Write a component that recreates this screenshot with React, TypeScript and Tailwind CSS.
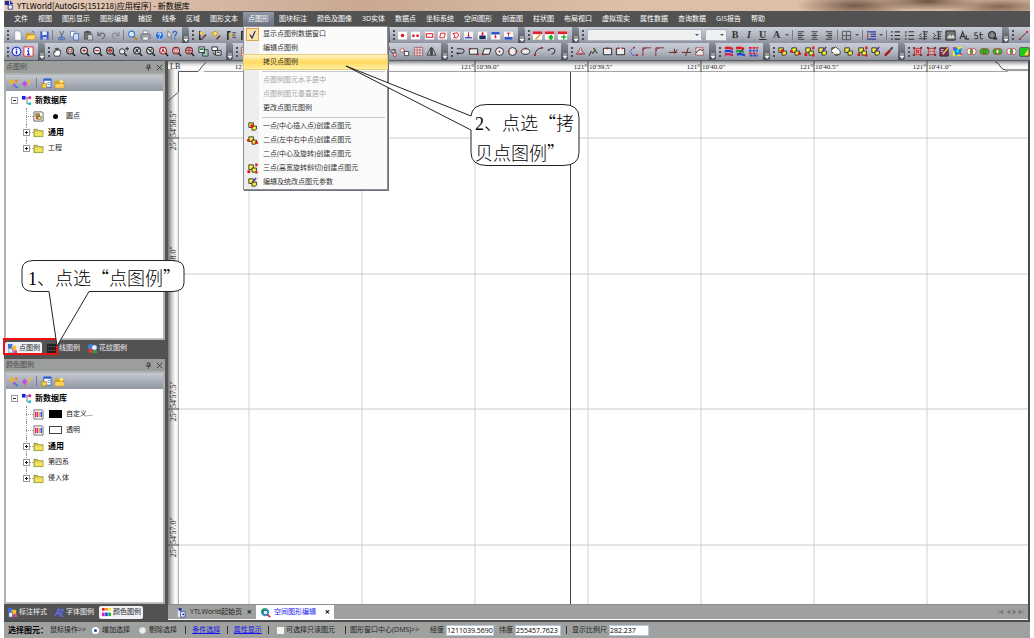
import React, { useState } from 'react';
import clsx from 'clsx';

type Drawing = React.ReactNode;

const lens = (inner: Drawing, color = '#222') => (
  <>
    <circle cx="5.5" cy="5" r="3.7" fill="#e8e8ea" stroke={color} strokeWidth="1.2" />
    <path d="M8.2 7.8 11 11" stroke="#222" strokeWidth="1.7" />
    {inner}
  </>
);

const sheet = (inner: Drawing) => (
  <>
    <rect x="1" y="1.5" width="10" height="9" fill="#fff" stroke="#b9bdc9" strokeWidth=".5" />
    {inner}
  </>
);

const headed = (inner: Drawing) => (
  <>
    <rect x="1" y="1.5" width="10" height="9" fill="#fff" />
    <rect x="1" y="1.5" width="10" height="3" fill="#e0202a" />
    {inner}
  </>
);

// yellow pair of blocks shared by all "create point" tools
const blocks = (inner: Drawing) => (
  <>
    <path d="M2 2h5v5H2z" fill="#f4ee3c" stroke="#222" strokeWidth=".9" />
    <path d="M5.5 5.5h4.8v3.2L9 10H5.5z" fill="#f4ee3c" stroke="#222" strokeWidth=".9" />
    {inner}
  </>
);

const dotted = (inner: Drawing) => (
  <>
    <rect x="2.5" y="2.5" width="7" height="7" fill="#d9b9bd" stroke="#a02028" strokeWidth=".8" />
    <path d="M1 1h2v2H1zM9 1h2v2H9zM1 9h2v2H1zM9 9h2v2H9z" fill="#8c1c22" />
    {inner}
  </>
);

const venn = (left: string, right: string, middle: string) => (
  <>
    <circle cx="4.3" cy="6" r="3.3" fill={left} />
    <circle cx="7.7" cy="6" r="3.3" fill={right} />
    <path d="M6 3.2a3.3 3.3 0 0 1 0 5.6 3.3 3.3 0 0 1 0-5.6z" fill={middle} />
    <circle cx="4.3" cy="6" r="3.3" fill="none" stroke="#b3262c" strokeWidth=".7" />
    <circle cx="7.7" cy="6" r="3.3" fill="none" stroke="#b3262c" strokeWidth=".7" />
  </>
);

const icons: Record<string, Drawing> = {
  new: <path d="M3 1h4.5L10 3.500V11H3z" fill="#fff" stroke="#7d8aa5" strokeWidth=".7" />,
  open: (
    <>
      <path d="M1 3h4l1 1h4v6H1z" fill="#d79a25" />
      <path d="M3 5.500h9L10 10.500H1z" fill="#ffd869" stroke="#b67b12" strokeWidth=".5" />
      <path d="M7 2.500q2-2 3.500.5" stroke="#2d62b5" fill="none" />
    </>
  ),
  save: (
    <>
      <path d="M1.500 1.500h9v9h-9z" fill="#3f57c8" />
      <path d="M3.500 1.500h5v4h-5z" fill="#e9eefb" />
      <path d="M4 7.500h4.500v3H4z" fill="#b8c4ea" />
    </>
  ),
  cut: (
    <>
      <path d="M4 1l3 7M8.500 1l-3 7" stroke="#5b6b8c" strokeWidth="1.100" />
      <circle cx="4.200" cy="9.300" r="1.500" fill="none" stroke="#2b62c4" />
      <circle cx="8" cy="9.300" r="1.500" fill="none" stroke="#2b62c4" />
    </>
  ),
  copy: (
    <>
      <path d="M1.500 1.500h5v6h-5z" fill="#fff" stroke="#4a6fb5" strokeWidth=".8" />
      <path d="M5 4h5.500v7H5z" fill="#cfdef7" stroke="#3560ab" strokeWidth=".8" />
    </>
  ),
  paste: (
    <>
      <path d="M1.500 2h7v8h-7z" fill="#6f6f72" stroke="#444" strokeWidth=".7" />
      <path d="M3.500 1h3v2h-3z" fill="#444" />
      <path d="M5 5h5.500v6H5z" fill="#c9ccd2" stroke="#555" strokeWidth=".7" />
    </>
  ),
  undo: <path d="M2 2v4h4M2.500 5.500C5 2 10 3 9.500 6.500 9 9 7 9.500 6 10" fill="none" stroke="#6b6f78" strokeWidth="1.400" />,
  redo: <path d="M10 2v4H6M9.500 5.500C7 2 2 3 2.500 6.500 3 9 5 9.500 6 10" fill="none" stroke="#8c9099" strokeWidth="1.400" />,
  zoom: (
    <>
      <circle cx="5" cy="4.500" r="3.300" fill="#d5e9fb" stroke="#3874c8" strokeWidth="1.200" />
      <path d="M7.500 7l3.500 4" stroke="#b98225" strokeWidth="1.800" />
    </>
  ),
  print: (
    <>
      <path d="M3.500 1h5v3h-5z" fill="#fff" stroke="#666" strokeWidth=".7" />
      <path d="M1 4.500h10V9H1z" fill="#a8acb5" stroke="#555" strokeWidth=".7" />
      <path d="M3 7.500h6V11H3z" fill="#fff" stroke="#666" strokeWidth=".7" />
    </>
  ),
  help: (
    <>
      <circle cx="6" cy="6" r="4.500" fill="#2d72d8" stroke="#e7effc" strokeWidth=".6" />
      <path d="M4.700 4.800c0-2 3-1.700 2.700 0-.2 1-1.400 1-1.400 2M6 8.200v1" fill="none" stroke="#fff" strokeWidth="1.100" />
    </>
  ),
  whatis: (
    <>
      <path d="M1 1l4.500 5-2 .3L5 9.500 3.800 10 2.500 7 1 8z" fill="#fff" stroke="#345" strokeWidth=".6" />
      <path d="M6.500 3.500c0-3 4.500-2.500 4 0-.3 1.500-2 1.500-2 3.500M8.500 8.500v1.700" fill="none" stroke="#2867c8" strokeWidth="1.400" />
    </>
  ),
  penBar: <><path d="M3 1v10M3 10h3" stroke="#222" strokeWidth="1.500" /><path d="M3 2h3v3H3z" fill="#f2d51c" /><path d="M6 9l4-4" stroke="#7a2222" strokeWidth="1.500" /></>,
  penRing: <><circle cx="4.500" cy="4" r="2.500" fill="#f5e76b" stroke="#c0901a" /><path d="M6 10l4-4" stroke="#7a2222" strokeWidth="1.500" /></>,
  barText: <><path d="M2 1v10M2 2h3" stroke="#222" strokeWidth="1.600" /><path d="M4 4h3v3H4z" fill="#d8c21c" /><path d="M7 3h4M7 5.500h3M7 8h4" stroke="#333" /></>,
  info: <><circle cx="6" cy="6" r="4.700" fill="#fff" stroke="#1c2bdc" strokeWidth="1.200" /><path d="M6 5v4M6 2.700v1.400" stroke="#1c2bdc" strokeWidth="1.700" /></>,
  infoBox: <><path d="M1 1h10v10H1z" fill="#fff" stroke="#e0262c" /><path d="M6 5v4.500M6 2.200v1.600M4.500 5.200H6M4.500 9.300h3" stroke="#1c2bdc" strokeWidth="1.400" /></>,
  hand: <path d="M3 11C2 8 1 7 2 6l1.500 1V3q1-1 1.300 0V5 2.500q1-1 1.400 0V5l.3-2q1-.7 1.200.3V5.500q1-1.500 2-.5L8.500 11z" fill="#fff" stroke="#222" strokeWidth=".8" />,
  zWin: lens(<path d="M3.500 3.500h4v3h-4z" fill="none" stroke="#8a1c1c" strokeWidth=".8" />),
  zIn: lens(<path d="M3.500 5h4M5.500 3v4" stroke="#c01c1c" />),
  zOut: lens(<path d="M3.500 5h4" stroke="#c01c1c" strokeWidth="1.200" />),
  zPan: lens(<path d="M2 5h7M5.500 1.500v7M4 3.500h3v3H4z" fill="none" stroke="#a01c1c" strokeWidth=".8" />),
  zPlus: <><circle cx="4.500" cy="6" r="3" fill="#e8e8ea" stroke="#222" /><path d="M7 8l2.500 3" stroke="#222" strokeWidth="1.500" /><path d="M8 3h4M10 1v4" stroke="#222" /></>,
  zNo: lens(<path d="M3.500 7l4-4.500M4 3l3 4" stroke="#222" strokeWidth="1.100" />),
  zPrev: lens(<path d="M3.500 3.500l4 3.500M7.500 3L5 6" stroke="#222" strokeWidth="1.100" />),
  zAll: lens(<path d="M4 7l1.500-4L7 7M4.500 5.500h2" fill="none" stroke="#c01c1c" />, '#b01c1c'),
  zDoc: lens(<path d="M4.200 3h2.500v4H4.200z" fill="#fff" stroke="#c01c1c" strokeWidth=".8" />, '#7c2020'),
  zGrid: lens(<path d="M2 5h7M5.500 1.500v7M3 3.300h5M3 6.700h5" stroke="#a01c1c" strokeWidth=".8" />, '#7c2020'),
  winGreen: <><path d="M1 1h6v6H1z" fill="#fff" stroke="#222" /><path d="M2 2.500h4v2H2z" fill="#148a3c" /><path d="M7 4h4v7H5V8h2z" fill="#9fc7b0" stroke="#223" strokeWidth=".8" /></>,
  winCopy: <><path d="M1 1h6v4H1z" fill="#fff" stroke="#222" /><path d="M5 5h6v5H5z" fill="#e6e6ea" stroke="#222" /><path d="M6.500 7h3M2 7l2 3" stroke="#222" /></>,
  sDot: sheet(<circle cx="6" cy="6" r="1.900" fill="#e0141c" />),
  sTwo: sheet(<path d="M2.500 5h2.500v2.500H2.500zM7 5h2.500v2.500H7z" fill="#e0141c" />),
  sRect: sheet(<path d="M2.500 4h7v4h-7z" fill="none" stroke="#e0141c" strokeWidth="1.100" />),
  sSkew: sheet(<path d="M4 3.500h5L8 8.500H3z" fill="none" stroke="#e0141c" />),
  sPoly: sheet(<path d="M3 4l5-1 1.500 2.500-2 3H4l1.500-2z" fill="none" stroke="#e0141c" />),
  sDown: sheet(<><path d="M2 8.500h8" stroke="#1c3cc8" strokeWidth="1.400" /><path d="M6 2.500v5M4.500 6L6 7.500 7.500 6" stroke="#e0141c" fill="none" /></>),
  sFill: sheet(<><path d="M2.500 6h7v4h-7z" fill="#1c2b5c" /><path d="M5 2.500h2v3.500H5z" fill="#e0141c" /></>),
  sTop: sheet(<><path d="M1.500 2h9v3h-9z" fill="#2c58c8" /><path d="M6 5v4M4.500 7.500h3" stroke="#e0141c" /></>),
  sBase: sheet(<><path d="M1.500 7.500h9v3h-9z" fill="#2c58c8" /><path d="M6 3v4M4 3.500h4" stroke="#e0141c" /></>),
  hPen: headed(<path d="M4 10l5-5" stroke="#d8961c" strokeWidth="1.600" />),
  hDot: headed(<path d="M7.500 5.500v5M5 8h5" stroke="#1eb41e" strokeWidth="2.400" />),
  hPlus: headed(<path d="M7.500 5v5.500M4.700 7.700h5.500" stroke="#1eb41e" strokeWidth="1.500" />),
  left: <path d="M2 2h7M2 4h5M2 6h7M2 8h5M2 10h7" stroke="#444" strokeWidth="1.100" />,
  center: <path d="M2.500 2h7M4 4h4M2.500 6h7M4 8h4M2.500 10h7" stroke="#444" strokeWidth="1.100" />,
  right: <path d="M3 2h7M5 4h5M3 6h7M5 8h5M3 10h7" stroke="#444" strokeWidth="1.100" />,
  border: <path d="M1.500 1.500h9v9h-9zM6 1.500v9M1.500 6h9" fill="none" stroke="#555" />,
  spacing: <><path d="M1 2h10M5 4.500h6M5 7h6M1 10h10" stroke="#3a3a9c" strokeWidth="1.300" /><path d="M2 3.500v5" stroke="#b01c24" /></>,
  bullets: <path d="M1 2h2M1 6h2M1 10h2M5 2h6M5 6h6M5 10h6" stroke="#333" strokeWidth="1.300" />,
  numbers: <path d="M2 1v2.500M2 5v2M2 9v2M5 2h6M5 6h6M5 10h6" stroke="#333" strokeWidth="1.100" />,
  outdent: <path d="M5 2h6M6 4.500h4M6 7h4M1 9.500h9M4 3.500L1.500 6 4 8M7 1v10" fill="none" stroke="#333" />,
  indent: <path d="M5 2h6M6 4.500h4M6 7h4M1 9.500h9M1.500 3.500L4 6 1.500 8M7 1v10" fill="none" stroke="#333" />,
  picture: <><path d="M1 1h10v10H1z" fill="#777" stroke="#222" /><path d="M2 9l3-4 2 2 2-2 2 4z" fill="#ddd" /></>,
  letterA: <path d="M1 10l3-8 3 8M2.200 7h3.600M8 6v4h3" fill="none" stroke="#333" strokeWidth="1.200" />,
  letterS: <path d="M5 3H2v3h3v3.500H1.500M8 2v7.500h3M6.500 5H11" fill="none" stroke="#333" />,
  globe: <><circle cx="5.500" cy="5.500" r="4" fill="#666" stroke="#222" /><path d="M2 5.500h7M5.500 2v7" stroke="#bbb" strokeWidth=".7" /><path d="M7 8h4v2.500H7z" fill="#333" /></>,
  line: <><path d="M2 9.500l7.500-7" stroke="#6c3030" /><path d="M1 9h2v2H1zM9 1h2v2H9z" fill="#d01c24" /></>,
  nodes: <><path d="M2 2l7 8M6 4h4v4" fill="none" stroke="#333" /><path d="M1 1h2.500v2.500H1zM8 8h3v3H8z" fill="#fff" stroke="#b01c24" strokeWidth=".8" /></>,
  nodes2: <><path d="M1 5l3-3 2 3-3 2z" fill="#fff" stroke="#b01c24" strokeWidth=".8" /><path d="M6 6h4.500v4.500H6z" fill="#fff" stroke="#333" strokeWidth=".9" /></>,
  mesh: <path d="M1.500 1.500h9v9h-9zM4.500 1.500v9M7.500 1.500v9M1.500 4.500h9M1.500 7.500h9" fill="#f0e4e4" stroke="#a04046" strokeWidth=".7" />,
  mirror: <path d="M5 2v8H1zM7 2v8h4zM6 1v10" fill="none" stroke="#333" strokeWidth=".9" />,
  arrow: <path d="M2 3h5q3 0 3 2.500T7 8H2M3.500 6.500L2 8l1.500 1.500" fill="none" stroke="#222" />,
  rect: <><path d="M1.500 3h9v6h-9z" fill="#eee" stroke="#222" /><path d="M1 2.200h2v1.600H1zM9.500 8h2v2h-2z" fill="#b01c24" /></>,
  skew: <><path d="M3.500 3H11L9 9H1.500z" fill="#eee" stroke="#222" /><path d="M1 8h2v2H1z" fill="#b01c24" /></>,
  circleC: <><circle cx="6" cy="6" r="4.300" fill="#eee" stroke="#222" /><circle cx="6" cy="6" r="1.100" fill="#b01c24" /></>,
  circle: <><circle cx="6" cy="6" r="4.300" fill="#eee" stroke="#222" /><path d="M1 5h1.800v1.800H1zM9.500 5h1.800v1.800H9.500z" fill="#b01c24" /></>,
  ellipse: <><ellipse cx="6" cy="6" rx="4.500" ry="3" fill="#eee" stroke="#222" /><path d="M5 2h2v1.600H5zM1 5h1.500v1.800H1z" fill="#b01c24" /></>,
  arc: <><path d="M2 10.500Q2.500 3 9.500 2" fill="none" stroke="#222" /><path d="M1 9h2v2H1zM9 1h2v2H9z" fill="#b01c24" /></>,
  hook: <path d="M2 4.500q6-4 8 0 0 4-4 4.500M2 4.500h2" fill="none" stroke="#222" />,
  contour: <path d="M1.500 9q1-3 3-3 0-4 1.500-4t1.500 4q2 0 3 3zM3 8h6" fill="#e9dcdc" stroke="#8c1c24" strokeWidth=".8" />,
  pen: <><path d="M1.500 10.500q2-7 3-3.500t3-4" fill="none" stroke="#222" /><path d="M6 2l4 6" stroke="#4a6a18" strokeWidth="1.500" /></>,
  frame: <><path d="M1.500 2.500h9v7h-9z" fill="#eee" stroke="#222" /><path d="M5 1.500h2v2H5z" fill="#b01c24" /></>,
  frameGap: <><path d="M4 2.500H1.500v7h9v-7H8" fill="#eee" stroke="#222" /><path d="M3.500 1.500h1.500v2H3.500zM7 1.500h1.500v2H7z" fill="#b01c24" /></>,
  fan: <><path d="M7 1L2 5.500 5 10h5" fill="none" stroke="#2c34d8" strokeDasharray="2 1" /><path d="M5.500 1h2v1.700h-2zM9 9h2v2H9z" fill="#d01c24" /></>,
  corner: <path d="M2 11V6q0-4 4-4h5M2 5V2h4" fill="none" stroke="#8c3030" />,
  cross: <path d="M1 7h9M7 3v5l3-4" fill="none" stroke="#6c2020" />,
  crossing: <path d="M1 7h10M8 2L5 11" fill="none" stroke="#5c2020" />,
  cutout: <><path d="M2 2h8v8H2z" fill="#eee" stroke="#a02a30" strokeDasharray="2 1" /><path d="M2 8q3-6 8-3" fill="none" stroke="#222" /></>,
  layers: <><path d="M2 1q4-1 9 1v2.500Q6 2.500 2 3.500z" fill="#e01c2c" /><path d="M2 4.500q4-1 9 1V8Q6 6 2 7z" fill="#2440d8" /><path d="M2 8q4-1 9 1v2.500Q6 9.500 2 10.500z" fill="#d81c5c" /></>,
  layers2: <><path d="M1 1q4-1 9 1v2.500Q6 2.500 1 3.500z" fill="#e01c2c" /><path d="M1 4.500q4-1 9 1V8Q6 6 1 7z" fill="#18a03c" /><path d="M2 8q4-1 9 1v2.500Q6 9.500 2 10.500z" fill="#2440d8" /><path d="M4 9l5-6" stroke="#222" /></>,
  layers3: <><path d="M1 2h10M1 8h9" stroke="#e01c2c" strokeWidth="1.800" strokeDasharray="3 1" /><path d="M1 5h10M2 10.500h9" stroke="#2440d8" strokeWidth="1.800" strokeDasharray="3 1" /></>,
  bOne: blocks(<circle cx="5.500" cy="5.500" r="1.900" fill="#e0141c" />),
  bTwo: blocks(<path d="M0 4.500h3v2.500H0zM8.500 7H12v2.500H8.500z" fill="#e0141c" />),
  bThree: blocks(<path d="M.5 8h3v3h-3zM9 .5h2.500v3H9zM9 9h2.500v2.500H9z" fill="#e0141c" />),
  bEdit: blocks(<path d="M6 6l4-5" stroke="#5c34a8" strokeWidth="1.700" />),
  bHouse: blocks(<path d="M1 5l5-4 5 4v4H6" fill="#fff" stroke="#222" strokeWidth=".8" />),
  bPlain: blocks(null),
  wand: <><path d="M2 10.500l6-6" stroke="#b0141c" strokeWidth="2.600" /><path d="M8 4l2.500-2.500" stroke="#333" strokeWidth="1.700" /></>,
  dX: dotted(<path d="M4 4l4 4M8 4L4 8" stroke="#e0141c" strokeWidth="1.400" />),
  dGrid: dotted(<path d="M4.500 3v6M7.500 3v6M3 6h6" stroke="#c0545c" strokeWidth=".7" />),
  dPen: <><path d="M1 2h9v9H1z" fill="#7c2c5c" stroke="#3a2a2a" /><path d="M4 9l6-7" stroke="#e8dc3c" strokeWidth="1.500" /><path d="M2 4h3M2 6h2" stroke="#ddd" /></>,
  splash: <><path d="M1 1h10v10H1z" fill="#f4ec1c" /><path d="M1 3l4-2 2 3 4-2-1 5 1 3-4-1-3 2-1-4z" fill="#1c7cf4" /><path d="M1 1h3L1 5zM8 8h3v3z" fill="#e81cc8" /><circle cx="6" cy="5.500" r="1.700" fill="#1ce4e8" /></>,
  vMid: venn('#fff', '#fff', '#1ec81e'),
  vAll: venn('#1ec81e', '#1ec81e', '#1ec81e'),
  vSides: venn('#1ec81e', '#1ec81e', '#fff'),
  vRight: venn('#fff', '#fff', '#1ec81e'),
  split: <><path d="M1 2h10v9H1z" fill="#f0e43c" stroke="#222" /><path d="M1 2h10L5 11H1z" fill="#1ec81e" /></>,
  app: <><path d="M1 1h5v5H1z" fill="#1c2c9c" /><path d="M5 6h5v5H5z" fill="#fff" stroke="#1c2c9c" /><path d="M8 1v3h3" stroke="#1c2c9c" fill="none" strokeWidth="1.500" /></>,
  page: <><path d="M2 3h3v8H2z" fill="#dfe6fa" /><path d="M5 5h5v6H5z" fill="#eef2ff" stroke="#2a3c9c" strokeWidth=".8" /><path d="M3 1h3v3H3zM7 7h2v2H7z" fill="#1c2c9c" /></>,
  world: <><circle cx="5.500" cy="5.500" r="4.500" fill="#3aa0dc" /><path d="M2 3q3-3 5 0L5 6 2 7z" fill="#2ca03c" /><circle cx="6" cy="6" r="2.500" fill="#e4f4ff" stroke="#2a5ca8" /><path d="M8 8l3 3" stroke="#c8281c" strokeWidth="1.700" /></>,
  flower: <><path d="M1 4l3-3 3 3-3 3z" fill="#f2b41c" /><path d="M7 3l2-2 2 2-2 2z" fill="#e88a1c" /><path d="M5 8l2-2 2 2-2 2z" fill="#9a5ad8" /><path d="M8 9h3v2H8z" fill="#3a7ae0" /></>,
  gem: <><path d="M1 6l3-3 3 3-3 4z" fill="#c84ae0" /><path d="M9 1l2 1-2 6-1-1z" fill="#f2c41c" /></>,
  newWin: <><path d="M3 1h8v9H3z" fill="#fff" stroke="#2c62c8" /><path d="M3 1h8v2H3z" fill="#2c62c8" /><path d="M1 6h5v5H1z" fill="#f5d04c" stroke="#96701c" strokeWidth=".6" /><path d="M7 5h3M7 7h3" stroke="#6c90d0" /></>,
  newFolder: <><path d="M1 3h4l1 1h5v7H1z" fill="#e0a01c" /><path d="M1 6h10v5H1z" fill="#ffd05c" stroke="#b07c14" strokeWidth=".5" /><path d="M8 1l1 2 2 .5-2 1-1 2-1-2-1.500-1L7 3z" fill="#fff27c" /></>,
  db: <><path d="M1 1h4v4H1z" fill="#1c24dc" /><path d="M5 3h3M6.500 3v6.500H8" stroke="#555" fill="none" strokeWidth=".8" /><path d="M8 1.500h3v3H8z" fill="#e01ca0" /><path d="M8 8h3v3H8z" fill="#18c8c8" /></>,
  folder: <><path d="M1 2.500h4l1 1.500h5v6.500H1z" fill="#c8c03c" stroke="#6c6820" strokeWidth=".6" /><path d="M2 5h8.500v5H2z" fill="#ece45c" /></>,
  symbol: <><path d="M1 1h9l1 1v9H1z" fill="#fff" stroke="#333" strokeWidth=".8" /><path d="M3 3h4v3H3z" fill="#e0a01c" stroke="#222" strokeWidth=".6" /><path d="M5 6h4v3H5z" fill="#f4ee3c" stroke="#222" strokeWidth=".6" /><path d="M3 7h2v2H3z" fill="#d01c24" /></>,
  palette: <><path d="M1 1h9l1 1v9H1z" fill="#fff" stroke="#444" strokeWidth=".8" /><path d="M3 3v6" stroke="#e01c24" strokeWidth="1.500" /><path d="M5 3v6" stroke="#d81cc0" strokeWidth="1.500" /><path d="M7 3v6" stroke="#f0b01c" strokeWidth="1.500" /><path d="M9 3v6" stroke="#1c3ce0" strokeWidth="1.500" /></>,
  tabPoint: <><path d="M1 1h5v5H1z" fill="#3c6ce0" /><path d="M5 3h5v5H5z" fill="#f0c02c" /><path d="M2 6h4v5H2z" fill="#e8f0ff" stroke="#3c5cb0" strokeWidth=".6" /><path d="M7 8h4v3H7z" fill="#d84c8c" /></>,
  tabLine: <><path d="M0 1h12v10H0z" fill="#222" /><path d="M1 4h10M1 8h10" stroke="#666" strokeDasharray="2 1" /></>,
  tabPattern: <><circle cx="4" cy="4" r="3" fill="#3c7ce0" /><circle cx="8" cy="5" r="3" fill="#e8f0ff" stroke="#3c5cb0" strokeWidth=".7" /><circle cx="4" cy="8.500" r="2.500" fill="#e03c3c" /><path d="M7 8h4v3H7z" fill="#2cb03c" /></>,
  tabFont: <path d="M1 10L5 2l1 7M2.500 7h4M7 3h4M9 3L7 10h3" fill="none" stroke="#5a6cf0" strokeWidth="1.400" />,
  tabColor: <><path d="M0 0h12v12H0z" fill="#fff" /><path d="M1 1h3v3H1z" fill="#e01c24" /><path d="M4.500 1h3v3h-3z" fill="#f0901c" /><path d="M8 1h3v3H8z" fill="#f0e01c" /><path d="M1 6h3v4H1z" fill="#d81cc0" /><path d="M4.500 6h3v4h-3z" fill="#1c50e0" /><path d="M8 6h3v4H8z" fill="#1cb03c" /></>,
};

const Icon = ({ name, className = 'size-[11px]' }: { name: string; className?: string }) => (
  <svg viewBox="0 0 12 12" className={clsx('shrink-0', className)} aria-hidden="true">
    {icons[name]}
  </svg>
);

const Caret = () => <span className="shrink-0 border-x-2 border-t-2 border-x-transparent border-t-[#555]" />;

const Tool = ({ name }: { name: string }) => {
  if (name === '|') return <span className="h-[10px] w-px shrink-0 bg-[#777c88]" />;
  if (name === 'v') return <Caret />;
  if (['B', 'I', 'U', 'A'].includes(name)) {
    return (
      <button
        type="button"
        className={clsx(
          'w-[11px] shrink-0 text-center font-["Liberation_Serif",serif] text-[10px] leading-3 font-bold text-[#333]',
          name === 'I' && 'italic',
          name === 'U' && 'underline'
        )}
      >
        {name}
      </button>
    );
  }
  return (
    <button type="button" aria-label={name} className="shrink-0">
      <Icon name={name} />
    </button>
  );
};

const Combo = ({ label, className }: { label: string; className: string }) => (
  <span className={clsx('relative flex h-3 shrink-0', className)}>
    <select aria-label={label} className="w-full appearance-none border border-[#aab0bc] bg-[#eff0f2]" />
    <span className="pointer-events-none absolute inset-y-0 right-[3px] flex items-center">
      <Caret />
    </span>
  </span>
);

const Grip = () => <span className="h-[10px] w-0 shrink-0 border-l-2 border-dotted border-[#4b4f59]" />;

interface BarProps {
  tools: string[];
  className: string;
  children?: React.ReactNode;
}

const Bar = ({ tools, className, children }: BarProps) => (
  <div className={clsx('flex shrink-0 items-stretch bg-linear-to-b from-[#c9ced8] via-[#b3b8c3] to-[#8d929e]', className)}>
    <div className="flex min-w-0 flex-1 items-center justify-between pr-1 pl-[3px]">
      <Grip />
      {children}
      {tools.map((t, i) => (
        <Tool key={i} name={t} />
      ))}
    </div>
    <span className="flex w-[7px] shrink-0 items-end justify-center rounded-r-xs bg-linear-to-b from-[#8b8f99] to-[#4e5159] pb-px">
      <svg viewBox="0 0 6 6" className="size-[6px]" aria-hidden="true">
        <path d="M1 1h4M1 3h4L3 5.500z" fill="#fff" stroke="#fff" strokeWidth=".7" />
      </svg>
    </span>
  </div>
);

const menus = [
  '文件', '视图', '图形显示', '图形编辑', '捕捉', '线条', '区域', '图形文本', '点图形', '图块标注', '颜色及图像', '3D实体',
  '数据点', '坐标系统', '空间图形', '剖面图', '柱状图', '布局视口', '虚拟现实', '属性数据', '查询数据', 'GIS报告', '帮助',
];

interface Entry {
  text?: string;
  icon?: string;
  checked?: boolean;
  active?: boolean;
  disabled?: boolean;
}

const entries: Entry[] = [
  { text: '显示点图例数据窗口', checked: true },
  { text: '编辑点图例' },
  { text: '拷贝点图例', active: true },
  {},
  { text: '点图例图元水平居中', disabled: true },
  { text: '点图例图元垂直居中', disabled: true },
  { text: '更改点图元图例' },
  {},
  { text: '一点(中心插入点)创建点图元', icon: 'bOne' },
  { text: '二点(左中右中点)创建点图元', icon: 'bTwo' },
  { text: '二点(中心及旋转)创建点图元' },
  { text: '三点(高宽旋转斜切)创建点图元', icon: 'bThree' },
  { text: '编辑及统改点图元参数', icon: 'bEdit' },
];

const DropMenu = () => (
  <div role="menu" className="absolute top-[15px] left-0 z-20 w-[145px] border border-[#8a8d94] bg-[#fbfbfb] bg-linear-to-r from-[#eeeeef] from-[15px] to-[#fbfbfb] to-[15px] text-[#333] shadow-[1px_1px_0_#70747c]">
    {entries.map((e, i) =>
      e.text ? (
        <button
          key={i}
          type="button"
          role="menuitem"
          disabled={e.disabled}
          className={clsx(
            'flex h-[14px] w-full items-center gap-1 pl-0.5 text-left whitespace-nowrap',
            e.active && 'bg-linear-to-b from-[#fff3c4] via-[#ffd85c] to-[#fff0a0] outline outline-[#e9cf7c]',
            e.disabled && 'text-[#a5a5a5]'
          )}
        >
          <span
            className={clsx(
              'flex size-[13px] items-center justify-center',
              e.checked && 'border border-[#e0a54a] bg-[#ffe3a6]'
            )}
          >
            {e.icon && <Icon name={e.icon} />}
            {e.checked && (
              <svg viewBox="0 0 10 10" className="size-[9px]" aria-hidden="true">
                <path d="M2 5l2.500 4L8 1" fill="none" stroke="#1f2a7c" strokeWidth="1.300" />
              </svg>
            )}
          </span>
          {e.text}
        </button>
      ) : (
        <div key={i} role="separator" className="mr-0.5 ml-[18px] flex h-1 items-center">
          <span className="h-px w-full bg-[#c9cacd]" />
        </div>
      )
    )}
  </div>
);

const PanelHeader = ({ title }: { title: string }) => (
  <header className="flex h-3 shrink-0 items-center justify-between bg-[#9c9e9b] px-0.5 text-[#4c4c4c]">
    <h2>{title}</h2>
    <div className="flex gap-1">
      <button type="button" aria-label="pin">
        <svg viewBox="0 0 8 8" className="size-[7px]" aria-hidden="true">
          <path d="M2.500 1h3v3.500h-3zM1 4.500h6M4 4.500V8M5 1v3.500" fill="none" stroke="#333" strokeWidth=".8" />
        </svg>
      </button>
      <button type="button" aria-label="close">
        <svg viewBox="0 0 8 8" className="size-[7px]" aria-hidden="true">
          <path d="M1 1l6 6M7 1L1 7" stroke="#333" />
        </svg>
      </button>
    </div>
  </header>
);

const PanelTools = () => (
  <div className="mx-0.5 mt-0.5 flex h-4 shrink-0 items-center gap-0.5 bg-linear-to-b from-[#c3c8d1] to-[#9298a4] pl-0.5">
    <Tool name="flower" />
    <Tool name="gem" />
    <span className="flex px-0.5">
      <Tool name="|" />
    </span>
    <Tool name="newWin" />
    <Tool name="newFolder" />
  </div>
);

const Expander = ({ open }: { open?: boolean }) => (
  <svg viewBox="0 0 7 7" className="size-[7px] shrink-0" aria-hidden="true">
    <path d={open ? 'M2 3.500h3' : 'M2 3.500h3M3.500 2v3'} stroke="#222" />
    <rect x=".5" y=".5" width="6" height="6" fill="none" stroke="#9a9a9a" />
  </svg>
);

interface Leaf {
  text: string;
  icon: string;
  bold?: boolean;
  sample?: 'dot' | 'black' | 'white';
}

const Tree = ({ leaves }: { leaves: Leaf[] }) => (
  <div className="mx-0.5 mb-px flex-1 border-b border-[#c8c8c8] bg-white pt-px">
    <ul className="text-[#222]">
      <li>
        <div className="flex h-4 items-center gap-[3px] pl-[5px] text-[8px] font-bold text-black">
          <Expander open />
          <Icon name="db" />
          新数据库
        </div>
        <ul className="ml-5">
          {leaves.map((l, i) => (
            <li key={l.text} className="relative flex h-4 items-center">
              <span className={clsx('absolute top-0 left-0 border-l border-dotted border-[#999]', i === leaves.length - 1 ? 'h-2' : 'h-4')} />
              {l.sample ? (
                <span className="w-[7px] border-t border-dotted border-[#999]" />
              ) : (
                <span className="relative -ml-[3px] flex w-[10px] items-center bg-white">
                  <Expander />
                  <span className="w-[3px] border-t border-dotted border-[#999]" />
                </span>
              )}
              <Icon name={l.icon} />
              {l.sample && (
                <span className="ml-1 flex w-[14px] justify-center">
                  {l.sample === 'dot' && <span className="size-[5px] rounded-full bg-black" />}
                  {l.sample === 'black' && <span className="h-2 w-[13px] bg-black" />}
                  {l.sample === 'white' && <span className="h-2 w-[13px] border border-[#444] bg-white" />}
                </span>
              )}
              <span className={clsx('pl-1 whitespace-nowrap', l.bold && 'text-[8px] font-bold text-black')}>{l.text}</span>
            </li>
          ))}
        </ul>
      </li>
    </ul>
  </div>
);

interface TabsProps {
  tabs: { text: string; icon: string }[];
  active: number;
  onPick: (i: number) => void;
}

const PanelTabs = ({ tabs, active, onPick }: TabsProps) => (
  <div role="tablist" className="flex h-4 shrink-0 items-center gap-[3px] pl-px text-[#f0f0f0]">
    {tabs.map((t, i) => (
      <button
        key={t.text}
        type="button"
        role="tab"
        aria-selected={i === active}
        onClick={() => onPick(i)}
        className={clsx(
          'flex h-[13px] items-center gap-px px-0.5',
          i === active && 'rounded-xs bg-[#eef1f6] text-[#222]'
        )}
      >
        <Icon name={t.icon} />
        {t.text}
      </button>
    ))}
  </div>
);

// the first two columns run under the open menu, so they carry no seconds
const columns = [
  { x: 81, degree: '121°' },
  { x: 194 },
  { x: 307, degree: '121°', label: `10'39.0"` },
  { x: 420, degree: '121°', label: `10'39.5"` },
  { x: 533, degree: '121°', label: `10'40.0"` },
  { x: 646, degree: '121°', label: `10'40.5"` },
  { x: 759, degree: '121°', label: `10'41.0"` },
];

const rows = [
  { y: 77, label: `54'58.5"` },
  { y: 213, label: `54'58.0"` },
  { y: 348, label: `54'57.5"` },
  { y: 484, label: `54'57.0"` },
];

// graticule with its two rulers
const MapView = () => (
  <svg className="block min-h-0 w-full flex-1 bg-white" fontFamily="Liberation Serif, serif" fontSize="7" fill="#222">
    <defs>
      <linearGradient id="rulerTop" x2="0" y2="1">
        <stop offset="0" stopColor="#8d8d8d" />
        <stop offset=".35" stopColor="#e6e6e6" />
        <stop offset=".55" stopColor="#ffffff" />
        <stop offset="1" stopColor="#f4f4f4" />
      </linearGradient>
      <linearGradient id="rulerLeft">
        <stop offset="0" stopColor="#777777" />
        <stop offset=".4" stopColor="#d6d6d6" />
        <stop offset=".7" stopColor="#ffffff" />
        <stop offset="1" stopColor="#dedede" />
      </linearGradient>
    </defs>
    <rect width="100%" height="11" fill="url(#rulerTop)" />
    <rect y="8" width="11" height="100%" fill="url(#rulerLeft)" />
    <path d="M36 10.500H840" stroke="#a5a5a5" />
    <path d="M10.500 32V543" stroke="#b5b5b5" />
    <path d="M0 40L10.500 31V10.500H30L38 1" fill="none" stroke="#555" />
    <path d="M827 1q3 0 5 4t6 4h22" fill="none" stroke="#444" />
    <text x="2" y="8" fontSize="8">LB</text>
    {columns.map((c) => (
      <g key={c.x}>
        <path d={`M${c.x} 11V543`} stroke="#d0d0d0" />
        <path d={`M${c.x} 0v11`} stroke="#444" />
        {c.degree && <text x={c.x - 1} y="8" textAnchor="end">{c.degree}</text>}
        {c.label && <text x={c.x + 1} y="8">{c.label}</text>}
      </g>
    ))}
    {rows.map((r) => (
      <g key={r.y} fontSize="8">
        <rect x="11" y={r.y - 0.5} width="100%" height="1" fill="#cccccc" />
        <path d={`M0 ${r.y}h11`} stroke="#444" />
        <g transform={`translate(8 ${r.y}) rotate(-90)`}>
          <text x="-1" textAnchor="end">25°</text>
          <text x="1">{r.label}</text>
        </g>
      </g>
    ))}
    <path d="M402.500 11V543" stroke="#444" />
  </svg>
);

const Divider = () => <span className="h-2 w-px bg-[#333]" />;

const Field = ({ label, value, className }: { label: string; value: string; className: string }) => (
  <label className="flex items-center gap-0.5">
    {label}
    <input defaultValue={value} className={clsx('h-[11px] border border-[#b5c6dc] bg-white text-black outline-none', className)} />
  </label>
);

const StatusBar = () => (
  <footer className="flex h-4 shrink-0 items-center bg-[#9fa19e] pl-1 whitespace-nowrap text-[#222]">
    <strong className="w-[42px] text-[8px] text-black">选择图元：</strong>
    <span className="w-[42px]">鼠标操作&gt;&gt;</span>
    <label className="flex w-[47px] items-center gap-[3px]">
      <input type="radio" name="pick" defaultChecked className="size-[7px] appearance-none rounded-full border-2 border-white bg-white checked:bg-[#1f4f9c]" />
      增加选择
    </label>
    <label className="flex w-[46px] items-center gap-[3px]">
      <input type="radio" name="pick" className="size-[7px] appearance-none rounded-full border border-[#ddd] bg-[#eee]" />
      剔除选择
    </label>
    <div className="mr-2 flex w-[84px] items-center justify-between">
      <Divider />
      <a href="#condition" className="text-[#1414f0] underline">条件选择</a>
      <Divider />
      <a href="#attributes" className="text-[#1414f0] underline">属性显示</a>
      <Divider />
    </div>
    <label className="flex w-[68px] items-center gap-0.5">
      <input type="checkbox" className="size-[7px] appearance-none bg-[#f4f4f4]" />
      可选择只读图元
    </label>
    <Divider />
    <span className="w-[84px] pl-1">图形窗口中心(DMS)&gt;&gt;</span>
    <div className="flex items-center gap-[5px]">
      <Field label="经度" value="1211039.5690" className="w-[48px]" />
      <Field label="纬度" value="255457.7623" className="w-[46px]" />
      <Divider />
      <Field label="显示比例尺" value="282.237" className="w-[40px]" />
    </div>
  </footer>
);

const pointLeaves: Leaf[] = [
  { text: '圆点', icon: 'symbol', sample: 'dot' },
  { text: '通用', icon: 'folder', bold: true },
  { text: '工程', icon: 'folder' },
];

const colorLeaves: Leaf[] = [
  { text: '自定义...', icon: 'palette', sample: 'black' },
  { text: '透明', icon: 'palette', sample: 'white' },
  { text: '通用', icon: 'folder', bold: true },
  { text: '第四系', icon: 'folder' },
  { text: '侵入体', icon: 'folder' },
];

const App: React.FC = () => {
  const [legendTab, setLegendTab] = useState(0);
  const [styleTab, setStyleTab] = useState(2);

  return (
    <div lang="zh-CN" className="relative h-screen overflow-hidden bg-white px-1 font-['Open_Sans','Noto_Sans_CJK_SC',sans-serif] text-[7px] leading-[10px]">
      <div className="flex h-full flex-col">
        <div className="flex h-[11px] shrink-0 items-start gap-[3px] bg-[#dcbfa7] bg-[radial-gradient(ellipse_60px_12px_at_83%_50%,#75594a,transparent),radial-gradient(ellipse_50px_10px_at_90%_10%,#6e5243,transparent),radial-gradient(ellipse_60px_10px_at_97%_60%,#856657,transparent),linear-gradient(to_right,#e5cdbb,#caa893_35%,#dcbfa7_60%)]">
          <Icon name="app" className="size-[10px]" />
          <h1 className="font-['Noto_Sans_CJK_SC',sans-serif] text-[8px] leading-[11px] whitespace-nowrap text-black">YTLWorld[AutoGIS(151218)应用程序] - 新数据库</h1>
        </div>

        <nav className="flex h-4 shrink-0 items-center bg-[#525252] pl-[3px] text-white">
          <Grip />
          {menus.map((m) => (
            <div key={m} className="relative flex h-full items-center">
              <button
                type="button"
                className={clsx(
                  'h-[14px] px-[5px] whitespace-nowrap',
                  m === '点图形' && 'bg-linear-to-b from-[#8f98a8] to-[#69717f]'
                )}
              >
                {m}
              </button>
              {m === '点图形' && <DropMenu />}
            </div>
          ))}
        </nav>

        <div className="flex h-4 shrink-0 overflow-hidden bg-[#9ca1ac]">
          <Bar className="w-[185px]" tools={['new', 'open', 'save', '|', 'cut', 'copy', 'paste', 'undo', 'redo', '|', 'zoom', 'print', 'help', 'whatis']} />
          <Bar className="w-[201px]" tools={['penBar', 'penRing', 'barText', 'barText', 'penBar', 'penRing', 'barText', 'barText', 'penBar', 'penRing', 'barText', 'barText', 'penBar']} />
          <Bar className="w-[135px]" tools={['sDot', 'sTwo', 'sRect', 'sSkew', 'sPoly', 'sDown', 'sFill', 'sTop', 'sBase']} />
          <Bar className="w-[54px]" tools={['hPen', 'hDot', 'hPlus']} />
          <Bar
            className="w-[430px]"
            tools={['B', 'I', 'U', 'A', 'v', '|', 'left', 'center', 'right', '|', 'border', 'v', '|', 'spacing', 'v', '|', 'bullets', 'numbers', 'outdent', 'indent', 'picture', 'letterA', 'letterS', 'globe']}
          >
            <Combo label="font" className="w-[115px]" />
            <Combo label="size" className="w-[22px]" />
          </Bar>
          <div className="flex min-w-0 flex-1 items-center gap-1 bg-linear-to-b from-[#c9ced8] to-[#8d929e] pl-[3px]">
            <Grip />
            <Tool name="line" />
          </div>
        </div>

        <div className="flex h-[18px] shrink-0 overflow-hidden border-b border-[#5a5d66] bg-[#9ca1ac]">
          <Bar className="w-[41px]" tools={['info', 'infoBox']} />
          <Bar className="w-[188px]" tools={['hand', 'zWin', 'zIn', 'zOut', 'zPan', 'zPlus', 'zNo', 'zPrev', 'zAll', 'zDoc', 'zGrid', 'winGreen', 'winCopy']} />
          <Bar className="w-[215px]" tools={['mesh', 'rect', 'nodes', 'mesh', 'rect', 'nodes', 'mesh', 'rect', 'nodes', 'mesh', 'rect', 'nodes', 'nodes2', 'mesh', 'mirror']} />
          <Bar className="w-[120px]" tools={['arrow', 'rect', 'skew', 'circleC', 'circle', 'ellipse', 'arc', 'hook']} />
          <Bar className="w-[148px]" tools={['contour', 'pen', 'frame', 'frameGap', 'fan', 'corner', 'corner', 'cross', 'crossing', 'cutout']} />
          <Bar className="w-[54px]" tools={['layers', 'layers2', 'layers3']} />
          <Bar className="w-[135px]" tools={['bOne', 'bTwo', 'bThree', 'bEdit', 'bHouse', 'bPlain', 'bThree', 'bEdit', 'wand']} />
          <div className="flex min-w-0 flex-1 items-center justify-between bg-linear-to-b from-[#c9ced8] to-[#8d929e] pl-[3px]">
            <Grip />
            {['dX', 'dGrid', 'dPen', 'splash', 'vMid', 'vAll', 'vSides', 'vRight', 'split'].map((t) => (
              <Tool key={t} name={t} />
            ))}
          </div>
        </div>

        <main className="flex min-h-0 flex-1 border-r-2 border-b-2 border-[#4c4c4c] bg-[#535353]">
          <aside className="flex w-[164px] shrink-0 flex-col pr-[3px]">
            <section className="flex h-[279px] shrink-0 flex-col bg-[#b0b2b0]">
              <PanelHeader title="点图例" />
              <PanelTools />
              <Tree leaves={pointLeaves} />
            </section>
            <PanelTabs
              tabs={[
                { text: '点图例', icon: 'tabPoint' },
                { text: '线图例', icon: 'tabLine' },
                { text: '花纹图例', icon: 'tabPattern' },
              ]}
              active={legendTab}
              onPick={setLegendTab}
            />
            <section className="mt-[3px] flex min-h-0 flex-1 flex-col bg-[#b0b2b0]">
              <PanelHeader title="颜色图例" />
              <PanelTools />
              <Tree leaves={colorLeaves} />
            </section>
            <PanelTabs
              tabs={[
                { text: '标注样式', icon: 'tabPoint' },
                { text: '字体图例', icon: 'tabFont' },
                { text: '颜色图例', icon: 'tabColor' },
              ]}
              active={styleTab}
              onPick={setStyleTab}
            />
          </aside>

          <div className="flex min-w-0 flex-1 flex-col">
            <MapView />
            <div className="flex h-4 shrink-0 items-stretch border-t border-b border-t-[#8c8e8c] border-b-white bg-[#9fa19e] text-[#222]">
              <div role="tab" className="flex w-[88px] items-center gap-[3px] pl-2">
                <Icon name="page" />
                YTLWorld起始页
                <button type="button" className="ml-auto pr-1 text-[9px] font-bold">×</button>
              </div>
              <div role="tab" aria-selected="true" className="flex w-[78px] items-center gap-[3px] bg-white pl-1 text-[#1414f0]">
                <Icon name="world" />
                空间图形编辑
                <button type="button" className="ml-auto pr-1 text-[9px] font-bold text-black">×</button>
              </div>
              <svg viewBox="0 0 26 6" className="mr-1 ml-auto h-[6px] w-[26px] self-center" aria-hidden="true">
                <path d="M1 1v4M5 1v4L2 3zM12 1v4L9 3zM15 1v4l3-2zM21 1v4l3-2zM25 1v4" fill="#777" stroke="#777" strokeWidth=".6" />
              </svg>
            </div>
          </div>
        </main>

        <StatusBar />
      </div>

      <div className="absolute top-[338px] left-[3px] z-20 h-[17px] w-[55px] border-2 border-[#ee1111]" />

      <svg className="pointer-events-none absolute inset-0 z-30 size-full" fill="#fff" stroke="#222" aria-hidden="true">
        <path d="M34 260.500H172q12 0 12 9v13q0 9-12 9H89L57 346 49 291.500H34q-12 0-12-9v-13q0-9 12-9z" />
        <path d="M487 104.500h76q16 0 16 13v35q0 13-16 13h-76q-16 0-16-13V130L346 66l125 50q1-11.500 16-11.500z" />
      </svg>
      <p className="absolute top-[262px] left-[28px] z-30 font-['Noto_Sans_CJK_SC',sans-serif] text-[18px] leading-[30px] font-light whitespace-nowrap text-black">
        <span className="font-['Liberation_Serif',serif] leading-none">1</span>、点选“点图例”
      </p>
      <p className="absolute top-[107px] left-[475px] z-30 font-['Noto_Sans_CJK_SC',sans-serif] text-[18px] leading-[30px] font-light whitespace-nowrap text-black">
        <span className="font-['Liberation_Serif',serif] leading-none">2</span>、点选“拷
        <br />
        贝点图例”
      </p>
    </div>
  );
};

export default App;
